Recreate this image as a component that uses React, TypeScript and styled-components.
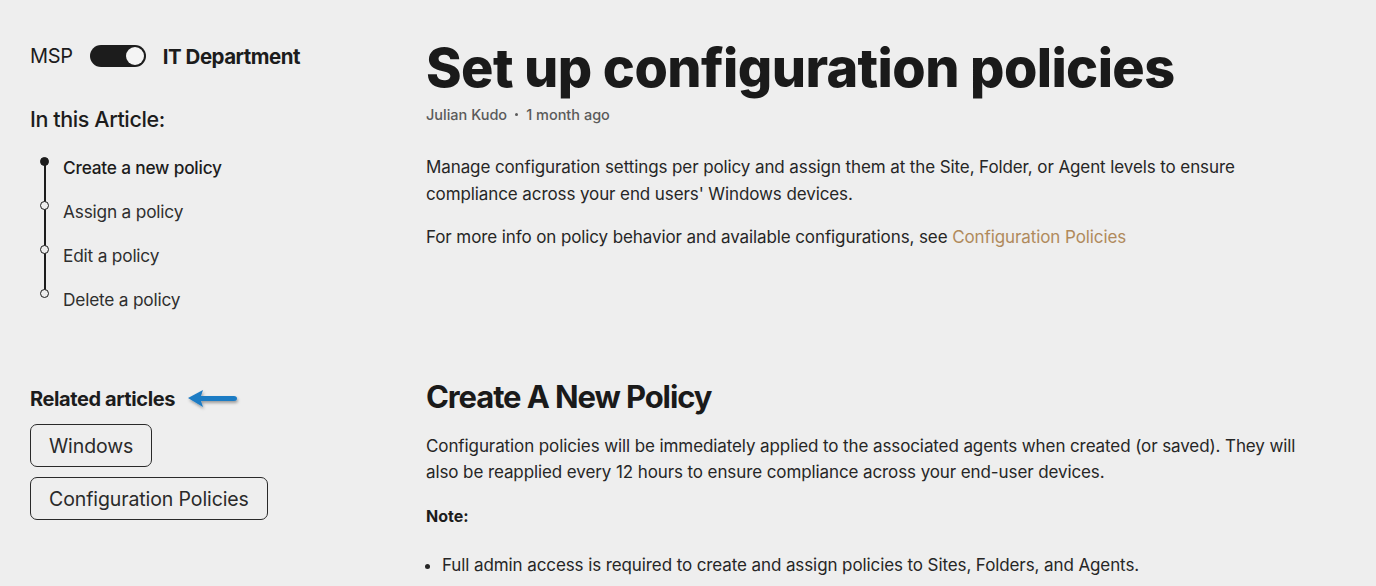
import React from "react";
import styled, { createGlobalStyle } from "styled-components";

const GlobalStyle = createGlobalStyle`
  html, body {
    margin: 0;
    padding: 0;
    background: #eeeeee;
  }
  body {
    font-family: "Inter", "Liberation Sans", sans-serif;
    color: #1c1c1c;
  }
`;

const Page = styled.div`
  display: flex;
  width: 1376px;
  height: 586px;
  overflow: hidden;
  box-sizing: border-box;
  padding: 38px 0 0 30px;
`;

const Sidebar = styled.aside`
  width: 396px;
  flex-shrink: 0;
  display: flex;
  flex-direction: column;
`;

const SwitchRow = styled.div`
  display: flex;
  align-items: center;
  gap: 17px;
  height: 36px;
  margin-bottom: 32px;
`;

const SwitchLabel = styled.span<{ active?: boolean }>`
  font-size: ${({ active }) => (active ? "20.5px" : "20px")};
  font-weight: ${({ active }) => (active ? 700 : 400)};
  letter-spacing: ${({ active }) => (active ? "-0.5px" : "-0.3px")};
`;

const Toggle = styled.span`
  position: relative;
  width: 56px;
  height: 22px;
  border-radius: 11px;
  background: #1c1c1c;

  &::after {
    content: "";
    position: absolute;
    right: 2px;
    top: 2px;
    width: 18px;
    height: 18px;
    border-radius: 50%;
    background: #f4f4f4;
  }
`;

const SideHeading = styled.h3<{ bold?: boolean }>`
  margin: 0;
  font-size: ${({ bold }) => (bold ? "20px" : "21.5px")};
  font-weight: ${({ bold }) => (bold ? 700 : 500)};
  letter-spacing: -0.4px;
  display: flex;
  align-items: center;
  gap: 10px;
`;

const Toc = styled.ul`
  list-style: none;
  margin: 25px 0 0;
  padding: 0;
  position: relative;

  &::before {
    content: "";
    position: absolute;
    left: 14px;
    top: 6px;
    height: 134px;
    width: 1.5px;
    background: #1c1c1c;
  }
`;

const TocItem = styled.li<{ current?: boolean }>`
  position: relative;
  height: 44px;
  line-height: 22px;
  padding-left: 33px;
  font-size: 17.3px;
  color: ${({ current }) => (current ? "#1c1c1c" : "#2e2e2e")};
  font-weight: ${({ current }) => (current ? 500 : 400)};
  letter-spacing: -0.2px;

  &::before {
    content: "";
    position: absolute;
    left: 10px;
    top: 0px;
    width: 7px;
    height: 7px;
    border-radius: 50%;
    border: 1.5px solid #1c1c1c;
    background: ${({ current }) => (current ? "#1c1c1c" : "#eeeeee")};
  }
`;

const Related = styled.div`
  margin-top: 53px;
  display: flex;
  flex-direction: column;
  align-items: flex-start;
`;

const Chips = styled.div`
  margin-top: 12px;
  display: flex;
  flex-direction: column;
  align-items: flex-start;
  gap: 10px;
`;

const Chip = styled.a`
  display: inline-flex;
  align-items: center;
  height: 43px;
  box-sizing: border-box;
  padding: 0 18px;
  border: 1px solid #2a2a2a;
  border-radius: 7px;
  font-size: 19.5px;
  color: #2a2a2a;
  letter-spacing: -0.1px;
`;

const Main = styled.main`
  width: 880px;
  flex-shrink: 0;
`;

const Title = styled.h1`
  margin: -6px 0 0;
  font-size: 54px;
  line-height: 72px;
  font-weight: 800;
  letter-spacing: -0.6px;
  color: #1a1a1a;
`;

const Meta = styled.div`
  margin-top: 2px;
  display: flex;
  align-items: center;
  gap: 8px;
  font-size: 14.5px;
  font-weight: 500;
  color: #5a5a5a;
`;

const Dot = styled.span`
  width: 3px;
  height: 3px;
  border-radius: 50%;
  background: #5a5a5a;
`;

const Para = styled.p`
  margin: 0 0 17px;
  font-size: 17px;
  line-height: 26.5px;
  color: #262626;
  letter-spacing: -0.1px;
`;

const Intro = styled.div`
  margin-top: 31px;
`;

const Link = styled.a`
  color: #b08a5c;
  text-decoration: none;
`;

const SectionTitle = styled.h2`
  margin: 126px 0 16px;
  font-size: 31px;
  line-height: 40px;
  font-weight: 700;
  letter-spacing: -1.1px;
  color: #1a1a1a;
`;

const Note = styled.p`
  margin: 0;
  font-size: 16px;
  font-weight: 700;
  line-height: 27px;
`;

const Bullets = styled.ul`
  margin: 22px 0 0;
  padding-left: 16px;
  font-size: 17px;
  line-height: 27px;
  color: #262626;
  letter-spacing: -0.1px;
`;

const Arrow = () => (
  <svg width="56" height="26" viewBox="0 0 56 26">
    <defs>
      <filter id="sh" x="-20%" y="-40%" width="140%" height="180%">
        <feDropShadow dx="1" dy="2" stdDeviation="1.5" floodColor="#000" floodOpacity="0.35" />
      </filter>
    </defs>
    <g filter="url(#sh)">
      <path d="M3 12 L18 4 L16 10 L49 10 Q52 10 52 12.5 Q52 15 49 15 L16 15 L18 21 Z" fill="#1f7bc4" />
    </g>
  </svg>
);

export default function App() {
  return (
    <>
      <GlobalStyle />
      <Page>
        <Sidebar>
          <SwitchRow>
            <SwitchLabel>MSP</SwitchLabel>
            <Toggle />
            <SwitchLabel active>IT Department</SwitchLabel>
          </SwitchRow>
          <SideHeading>In this Article:</SideHeading>
          <Toc>
            <TocItem current>Create a new policy</TocItem>
            <TocItem>Assign a policy</TocItem>
            <TocItem>Edit a policy</TocItem>
            <TocItem>Delete a policy</TocItem>
          </Toc>
          <Related>
            <SideHeading bold>
              Related articles <Arrow />
            </SideHeading>
            <Chips>
              <Chip>Windows</Chip>
              <Chip>Configuration Policies</Chip>
            </Chips>
          </Related>
        </Sidebar>
        <Main>
          <Title>Set up configuration policies</Title>
          <Meta>
            <span>Julian Kudo</span>
            <Dot />
            <span>1 month ago</span>
          </Meta>
          <Intro>
            <Para>
              Manage configuration settings per policy and assign them at the Site, Folder, or Agent levels to ensure
              compliance across your end users' Windows devices.
            </Para>
            <Para>
              For more info on policy behavior and available configurations, see{" "}
              <Link>Configuration Policies</Link>
            </Para>
          </Intro>
          <SectionTitle>Create A New Policy</SectionTitle>
          <Para>
            Configuration policies will be immediately applied to the associated agents when created (or saved). They will
            also be reapplied every 12 hours to ensure compliance across your end-user devices.
          </Para>
          <Note>Note:</Note>
          <Bullets>
            <li>Full admin access is required to create and assign policies to Sites, Folders, and Agents.</li>
          </Bullets>
        </Main>
      </Page>
    </>
  );
}
